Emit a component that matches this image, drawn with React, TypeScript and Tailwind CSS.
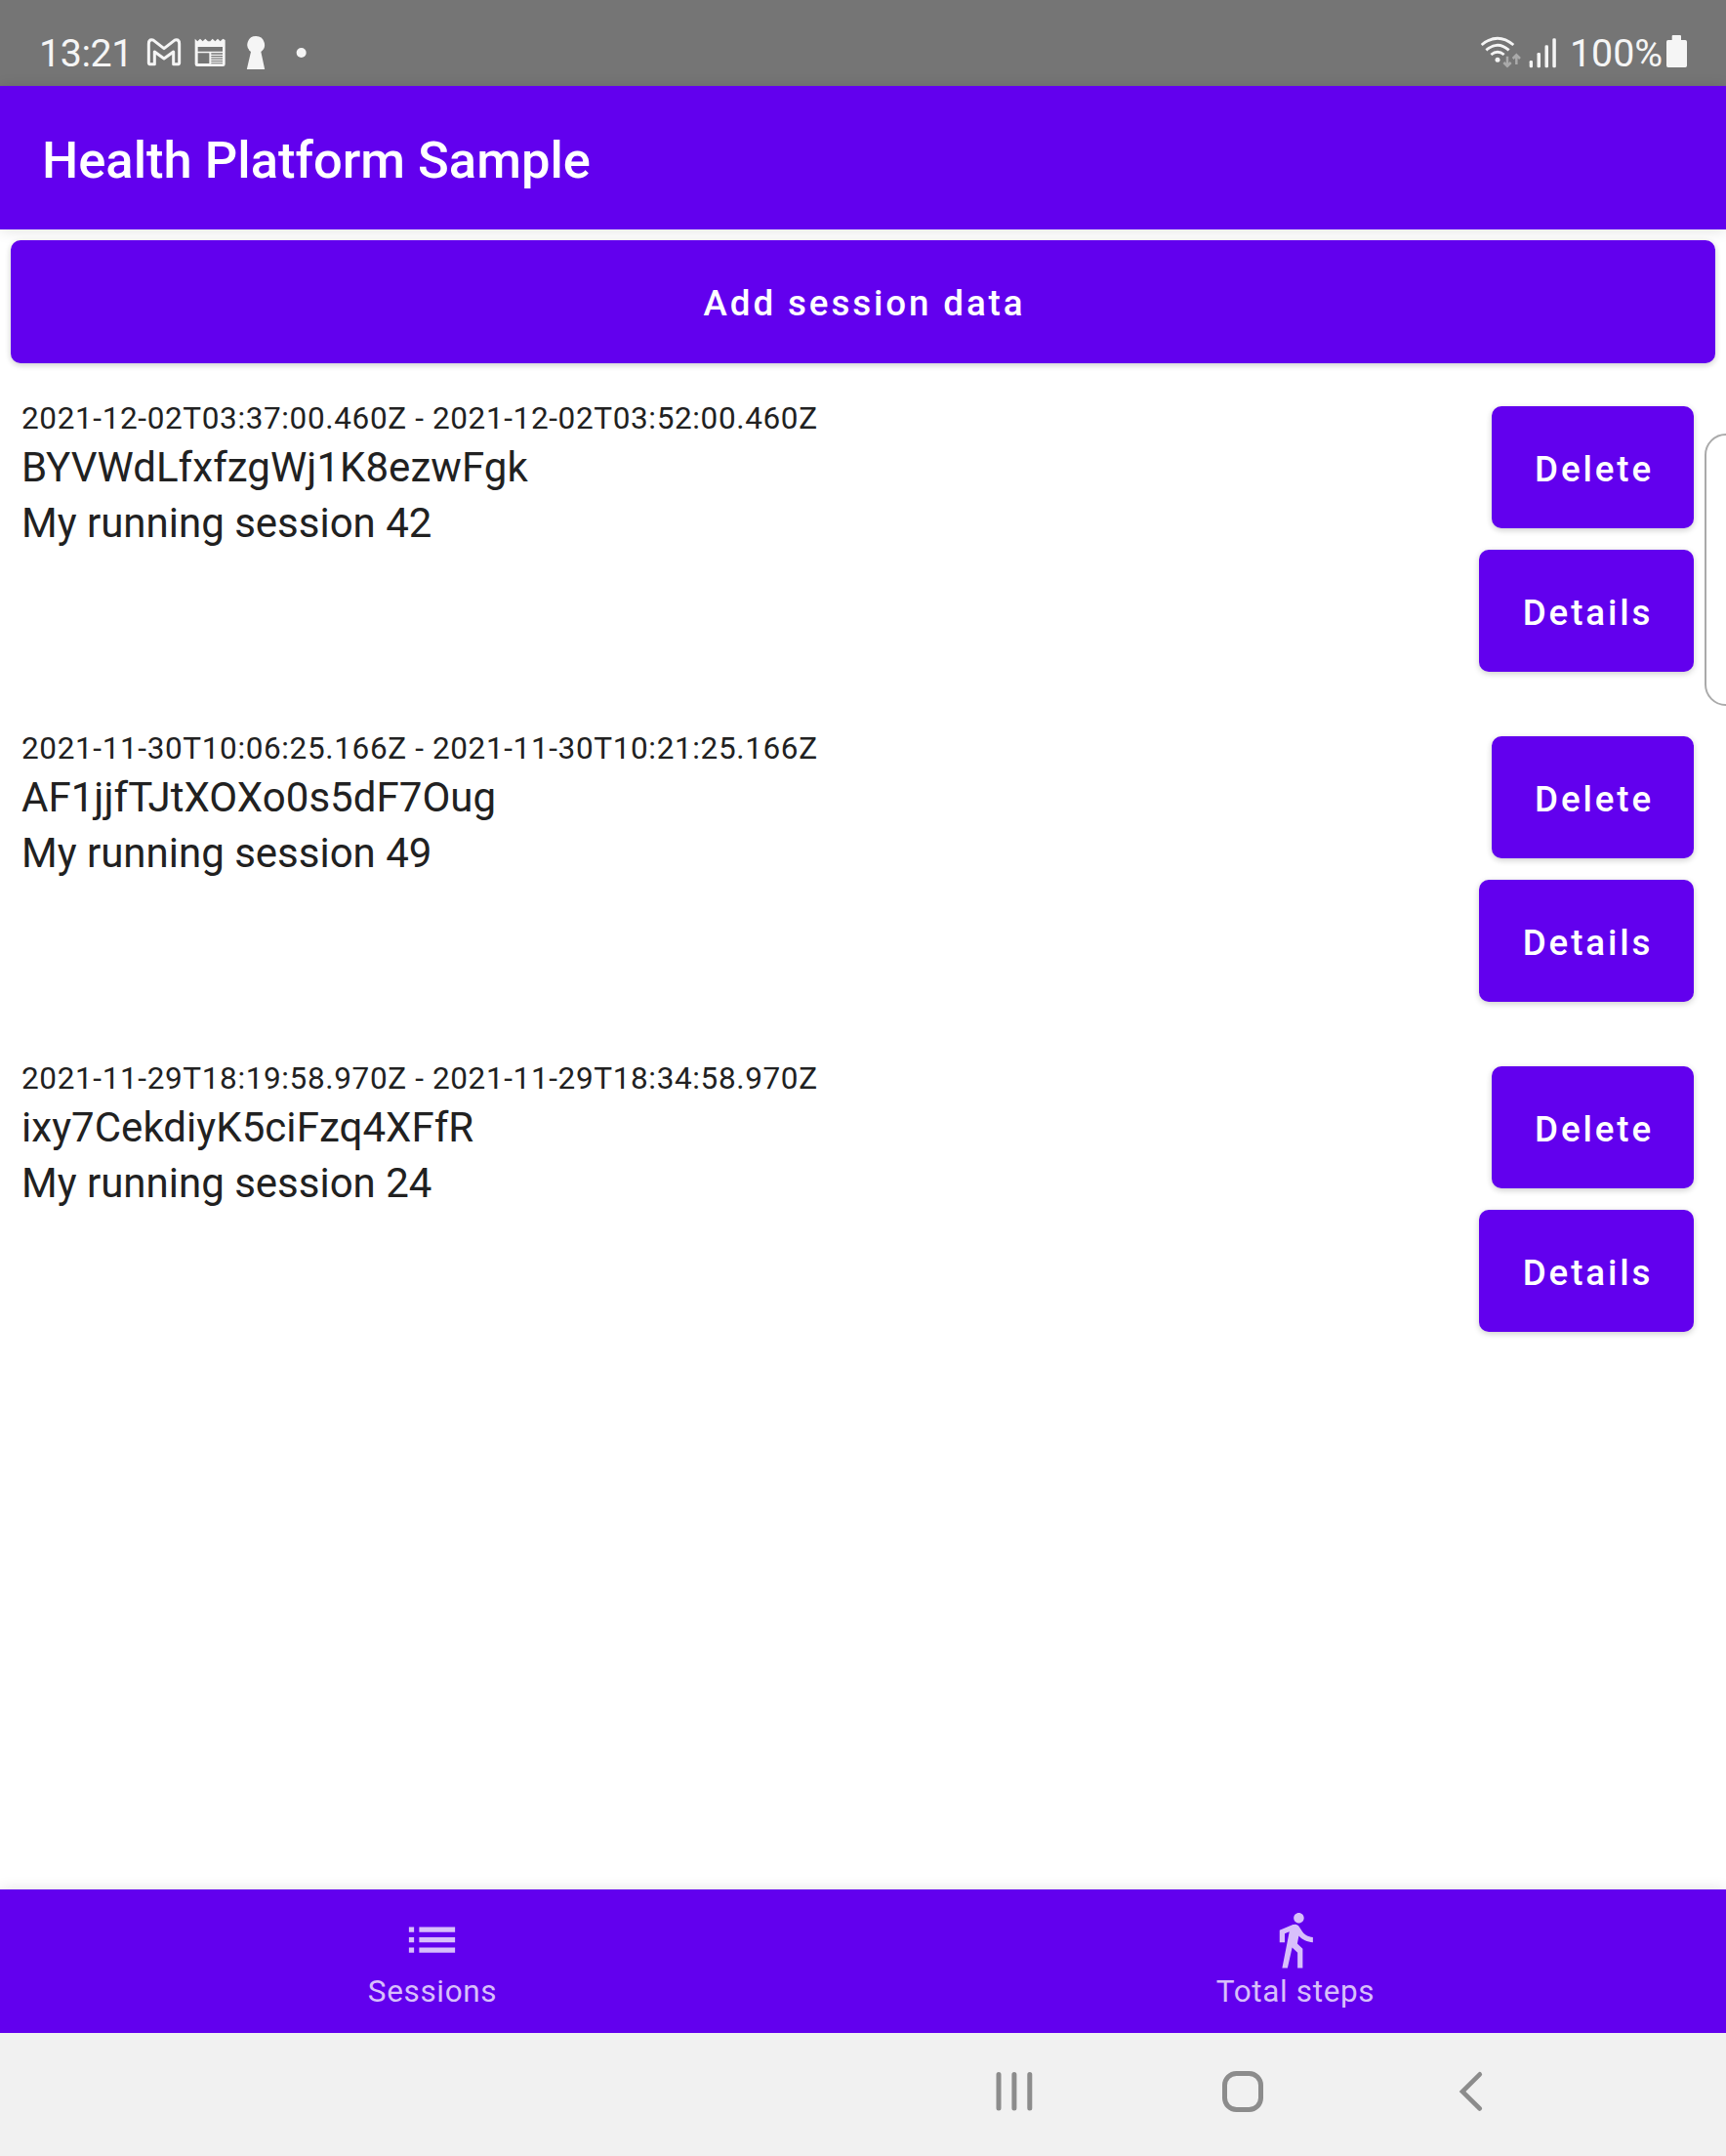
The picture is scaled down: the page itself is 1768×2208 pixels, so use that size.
import React from "react";

const sessions = [
  { range: "2021-12-02T03:37:00.460Z - 2021-12-02T03:52:00.460Z", id: "BYVWdLfxfzgWj1K8ezwFgk", title: "My running session 42" },
  { range: "2021-11-30T10:06:25.166Z - 2021-11-30T10:21:25.166Z", id: "AF1jjfTJtXOXo0s5dF7Oug", title: "My running session 49" },
  { range: "2021-11-29T18:19:58.970Z - 2021-11-29T18:34:58.970Z", id: "ixy7CekdiyK5ciFzq4XFfR", title: "My running session 24" },
];

function NotificationIcons() {
  return (
    <svg className="ml-[15px] h-[40px] w-[172px]" viewBox="0 0 516 120" fill="#f5f5f5">
      {/* mail */}
      <path d="M27 104H13Q10 104 10 100V41Q10 29 19 29Q22 29 25 31L57 56L89 31Q92 29 95 29Q104 29 104 41V100Q104 104 101 104H86V66L57 87L28 66V104Z" fill="none" stroke="#f5f5f5" strokeWidth="9" strokeLinejoin="round" />
      {/* newspaper */}
      <path fillRule="evenodd" d="M152 26L160 34L168 26L176 34L184 26L192 34L199 34L206 26L214 34L222 26L230 34L238 26L245 30V104Q245 111 238 111H159Q152 111 152 104ZM161 51V65H237V51ZM161 70V102H196V70ZM202 70V74H237V70ZM202 78V81.500H237V78ZM202 85.500V89H237V85.500ZM202 93V96H237V93ZM202 100V103H237V100Z" />
      {/* keyhole */}
      <path d="M340 18A26.500 26.500 0 0 1 355 66L367 122H311L324 66A26.500 26.500 0 0 1 340 18Z" />
      <circle cx="479" cy="69" r="15" />
    </svg>
  );
}

function ConnectivityIcons() {
  return (
    <svg className="h-[40px] w-[82px] overflow-visible" viewBox="0 0 246 120" fill="#f5f5f5">
      <g fill="none" stroke="#f5f5f5" strokeWidth="8.500">
        <path d="M5 45Q54 4 103 45" />
        <path d="M19 61Q54 30 89 61" />
        <path d="M34 75Q54 58 74 75" />
      </g>
      <circle cx="54" cy="91" r="7.500" />
      <g fill="none" stroke="#aaaaaa" strokeWidth="7.500">
        <path d="M84 80V110M73 99L84 110L95 99" />
        <path d="M112 105V76M101 87L112 76L123 87" />
      </g>
      <rect x="152" y="93" width="10" height="22" rx="4" />
      <rect x="175.500" y="69" width="10.500" height="46" rx="4" />
      <rect x="199.500" y="46" width="10.500" height="69" rx="4" />
      <rect x="223" y="25" width="10.500" height="90" rx="4" />
    </svg>
  );
}

function StatusBar() {
  return (
    <header className="flex h-[88px] items-start bg-[#757575] pt-[31px] pl-[40px] text-[39.375px] leading-[47px] text-[#f5f5f5]">
      <span className="w-[94px] whitespace-nowrap tracking-[-0.4px]">13:21</span>
      <NotificationIcons />
      <div className="ml-auto flex items-start pr-[40px]">
        <ConnectivityIcons />
        <span className="ml-[10px] w-[99px] whitespace-nowrap">100%</span>
        <svg className="mt-[5px] h-[33px] w-[21px]" viewBox="0 0 63 99" fill="#f5f5f5">
          <path d="M17 15V3Q17 0 20 0H42Q45 0 45 3V15H58Q63 15 63 20V94Q63 99 58 99H5Q0 99 0 94V20Q0 15 5 15Z" />
        </svg>
      </div>
    </header>
  );
}

function Button({ children, className }: { children: React.ReactNode; className: string }) {
  return (
    <button className={"flex items-center justify-center rounded-[10px] bg-[#6200ee] pt-[4px] pl-[3px] text-[36.75px] font-medium tracking-[2.88px] text-white shadow-[0_2px_6px_rgba(0,0,0,0.2)] " + className}>
      {children}
    </button>
  );
}

export default function App() {
  return (
    <div className="relative flex h-[2208px] w-[1768px] flex-col overflow-hidden bg-white font-['Roboto',sans-serif] text-[#212121]">
      <StatusBar />
      <div className="flex h-[147px] items-center bg-[#6200ee] pt-[5px] pl-[43px] text-[52.5px] font-medium text-white shadow-[0_1px_14px_rgba(0,0,0,0.12)]">
        <h1 className="whitespace-nowrap">Health Platform Sample</h1>
      </div>
      <main className="flex flex-1 flex-col px-[11px] pt-[11px]">
        <Button className="h-[126px] w-full">Add session data</Button>
        <ul className="mt-[23px]">
          {sessions.map((s) => (
            <li key={s.id} className="flex h-[338px] items-start justify-between pr-[22px] pl-[11px]">
              <div className="flex flex-col whitespace-nowrap pt-[15px]">
                <span className="mb-[3px] text-[31.5px] leading-[37px] tracking-[0.63px]">{s.range}</span>
                <span className="text-[42px] leading-[57px] tracking-[0.05px]">{s.id}</span>
                <span className="text-[42px] leading-[57px]">{s.title}</span>
              </div>
              <div className="flex flex-col items-end gap-[22px] pt-[21px]">
                <Button className="h-[125px] w-[207px]">Delete</Button>
                <Button className="h-[125px] w-[220px]">Details</Button>
              </div>
            </li>
          ))}
        </ul>
      </main>
      <nav className="flex h-[147px] bg-[#6200ee] text-[31.5px] leading-[37px] tracking-[0.65px] text-[#d8bffb] shadow-[0_0_14px_rgba(0,0,0,0.12)]">
        <div className="flex flex-1 flex-col items-center pt-[20px]">
          <svg className="size-[63px]" viewBox="0 0 24 24" fill="currentColor">
            <path d="M3 13h2v-2H3v2zm0 4h2v-2H3v2zm0-8h2V7H3v2zm4 4h14v-2H7v2zm0 4h14v-2H7v2zM7 7v2h14V7H7z" />
          </svg>
          <span className="mt-[3px] pl-[2px]">Sessions</span>
        </div>
        <div className="flex flex-1 flex-col items-center pt-[20px]">
          <svg className="size-[63px]" viewBox="0 0 24 24" fill="currentColor">
            <path d="M13.500 5.500c1.100 0 2-.9 2-2s-.9-2-2-2-2 .9-2 2 .9 2 2 2zM9.800 8.900L7 23h2.100l1.800-8 2.100 2v6h2v-7.500l-2.100-2 .6-3C14.800 12 16.800 13 19 13v-2c-1.900 0-3.500-1-4.300-2.400l-1-1.600c-.4-.6-1-1-1.700-1-.3 0-.5.1-.8.1L6 8.300V13h2V9.600l1.800-.7" />
          </svg>
          <span className="mt-[3px] pl-[2px]">Total steps</span>
        </div>
      </nav>
      <footer className="flex h-[126px] items-start bg-[#f1f1f1] pt-[39px] pl-[1020px]">
        <svg className="h-[42px] w-[38px]" viewBox="0 0 38 42" fill="none" stroke="#8c8c8c" strokeWidth="5" strokeLinecap="round">
          <path d="M3 3.500V38M18.900 3.500V38M34.800 3.500V38" />
        </svg>
        <svg className="ml-[194px] size-[42px]" viewBox="0 0 42 42" fill="none" stroke="#8c8c8c" strokeWidth="5">
          <rect x="2.500" y="2.500" width="37" height="37" rx="12" />
        </svg>
        <svg className="ml-[200px] h-[42px] w-[26px]" viewBox="0 0 26 42" fill="none" stroke="#8c8c8c" strokeWidth="4.600" strokeLinecap="round">
          <path d="M21.800 3.300L4 21L21.800 38.500" />
        </svg>
      </footer>
      <div className="absolute top-[444px] -right-[30px] h-[279px] w-[52px] rounded-[22px] border-2 border-[#aaaaaa] bg-white" />
    </div>
  );
}
